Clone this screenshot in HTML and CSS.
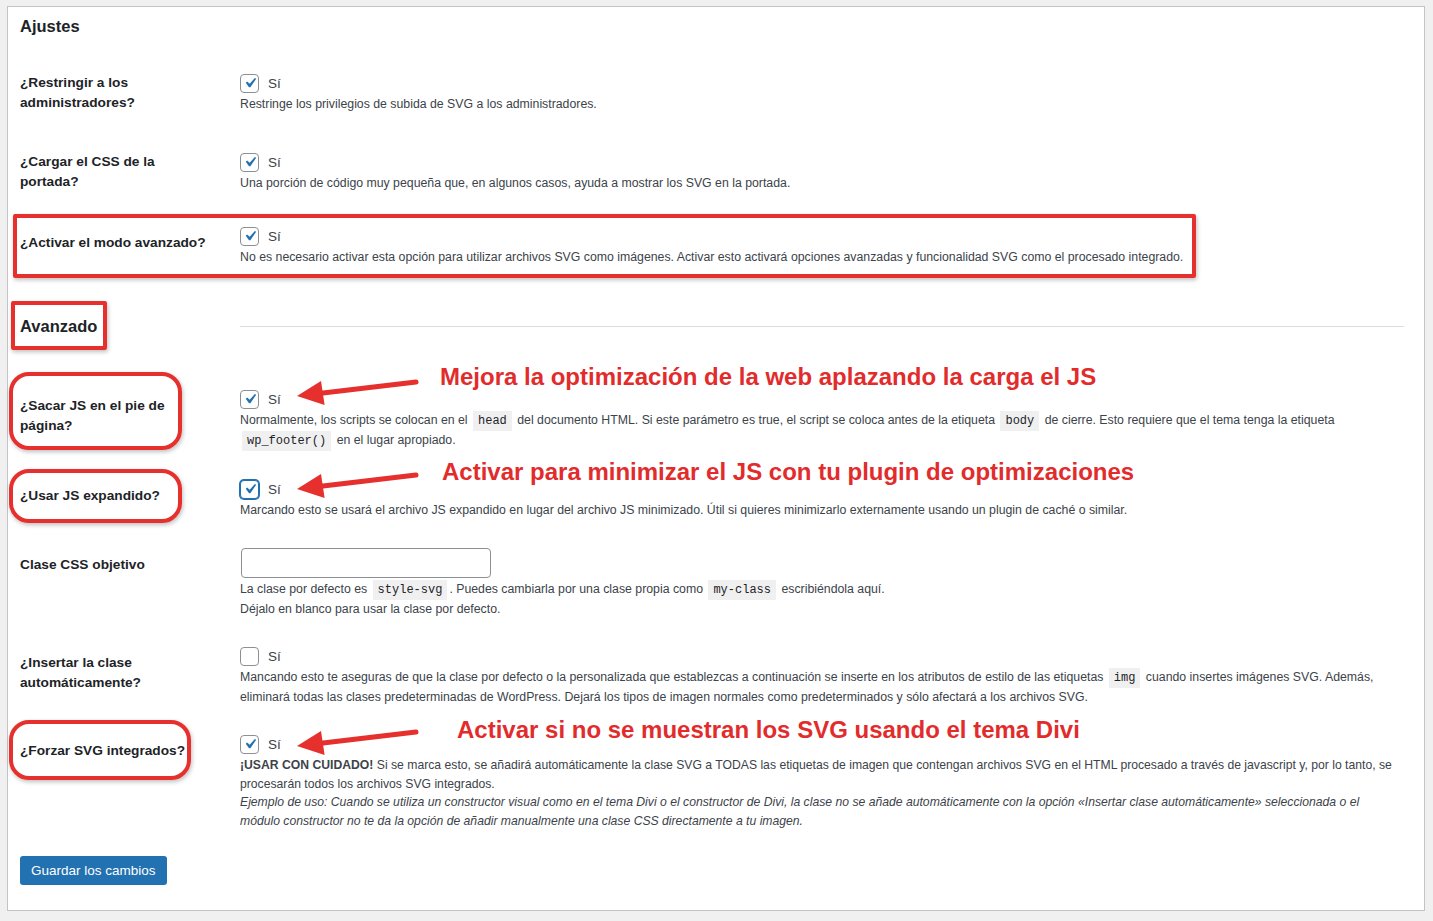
FILE: index.html
```html
<!DOCTYPE html>
<html lang="es">
<head>
<meta charset="utf-8">
<title>Ajustes</title>
<link rel="stylesheet" href="styles.css">
</head>
<body>
<div class="panel">
  <h2 class="section-title">Ajustes</h2>

  <div class="row gap-37">
    <div class="label label-flush">¿Restringir a los<br>administradores?</div>
    <div class="field">
      <label class="check"><span class="box"><svg viewBox="0 0 20 20"><path d="M14.83 4.89l1.34.94-5.81 8.38H9.02L5.78 9.670l1.34-1.25 2.57 2.4z"/></svg></span><span>Sí</span></label>
      <p class="desc">Restringe los privilegios de subida de SVG a los administradores.</p>
    </div>
  </div>

  <div class="row gap-38">
    <div class="label label-flush">¿Cargar el CSS de la<br>portada?</div>
    <div class="field">
      <label class="check"><span class="box"><svg viewBox="0 0 20 20"><path d="M14.83 4.89l1.34.94-5.81 8.38H9.02L5.78 9.67l1.34-1.25 2.57 2.4z"/></svg></span><span>Sí</span></label>
      <p class="desc">Una porción de código muy pequeña que, en algunos casos, ayuda a mostrar los SVG en la portada.</p>
    </div>
  </div>

  <div class="row gap-33">
    <div class="label">¿Activar el modo avanzado?</div>
    <div class="field">
      <label class="check"><span class="box"><svg viewBox="0 0 20 20"><path d="M14.83 4.89l1.34.94-5.81 8.38H9.02L5.78 9.67l1.34-1.25 2.57 2.4z"/></svg></span><span>Sí</span></label>
      <p class="desc">No es necesario activar esta opción para utilizar archivos SVG como imágenes. Activar esto activará opciones avanzadas y funcionalidad SVG como el procesado integrado.</p>
    </div>
    <div class="hl hl-rect hl-mode"></div>
  </div>

  <div class="row row-heading gap-49">
    <h2 class="section-title">Avanzado</h2>
    <div class="rule"></div>
    <div class="hl hl-rect hl-advanced"></div>
  </div>

  <div class="row gap-53">
    <div class="label">¿Sacar JS en el pie de<br>página?</div>
    <div class="field">
      <label class="check"><span class="box"><svg viewBox="0 0 20 20"><path d="M14.83 4.89l1.34.94-5.81 8.38H9.02L5.78 9.67l1.34-1.25 2.57 2.4z"/></svg></span><span>Sí</span></label>
      <p class="desc">Normalmente, los scripts se colocan en el <code>head</code> del documento HTML. Si este parámetro es true, el script se coloca antes de la etiqueta <code>body</code> de cierre. Esto requiere que el tema tenga la etiqueta<br><code>wp_footer()</code> en el lugar apropiado.</p>
    </div>
    <div class="hl hl-round hl-footer"></div>
    <svg class="arrow arrow-footer" viewBox="0 0 125 32"><line x1="121" y1="8" x2="28" y2="19"/><polygon points="2,22 29.6,31 26,7"/></svg>
    <div class="note note-footer">Mejora la optimización de la web aplazando la carga el JS</div>
  </div>

  <div class="row gap-29">
    <div class="label">¿Usar JS expandido?</div>
    <div class="field">
      <label class="check"><span class="box box-focus"><svg viewBox="0 0 20 20"><path d="M14.83 4.89l1.34.94-5.81 8.38H9.02L5.78 9.67l1.34-1.25 2.57 2.4z"/></svg></span><span>Sí</span></label>
      <p class="desc">Marcando esto se usará el archivo JS expandido en lugar del archivo JS minimizado. Útil si quieres minimizarlo externamente usando un plugin de caché o similar.</p>
    </div>
    <div class="hl hl-round hl-expanded"></div>
    <svg class="arrow arrow-expanded" viewBox="0 0 125 32"><line x1="121" y1="8" x2="28" y2="19"/><polygon points="2,22 29.6,31 26,7"/></svg>
    <div class="note note-expanded">Activar para minimizar el JS con tu plugin de optimizaciones</div>
  </div>

  <div class="row gap-28">
    <div class="label">Clase CSS objetivo</div>
    <div class="field">
      <input class="text-input" type="text">
      <p class="desc">La clase por defecto es <code>style-svg</code>. Puedes cambiarla por una clase propia como <code>my-class</code> escribiéndola aquí.<br>Déjalo en blanco para usar la clase por defecto.</p>
    </div>
  </div>

  <div class="row gap-27">
    <div class="label">¿Insertar la clase<br>automáticamente?</div>
    <div class="field">
      <label class="check"><span class="box box-empty"></span><span>Sí</span></label>
      <p class="desc">Mancando esto te aseguras de que la clase por defecto o la personalizada que establezcas a continuación se inserte en los atributos de estilo de las etiquetas <code>img</code> cuando insertes imágenes SVG. Además,<br>eliminará todas las clases predeterminadas de WordPress. Dejará los tipos de imagen normales como predeterminados y sólo afectará a los archivos SVG.</p>
    </div>
  </div>

  <div class="row gap-27">
    <div class="label">¿Forzar SVG integrados?</div>
    <div class="field">
      <label class="check"><span class="box"><svg viewBox="0 0 20 20"><path d="M14.83 4.89l1.34.94-5.81 8.38H9.02L5.78 9.67l1.34-1.25 2.57 2.4z"/></svg></span><span>Sí</span></label>
      <div class="desc-group">
        <p class="desc desc-tight"><strong>¡USAR CON CUIDADO!</strong> Si se marca esto, se añadirá automáticamente la clase SVG a TODAS las etiquetas de imagen que contengan archivos SVG en el HTML procesado a través de javascript y, por lo tanto, se<br>procesarán todos los archivos SVG integrados.</p>
        <p class="desc desc-tight"><em>Ejemplo de uso: Cuando se utiliza un constructor visual como en el tema Divi o el constructor de Divi, la clase no se añade automáticamente con la opción «Insertar clase automáticamente» seleccionada o el<br>módulo constructor no te da la opción de añadir manualmente una clase CSS directamente a tu imagen.</em></p>
      </div>
    </div>
    <div class="hl hl-round hl-force"></div>
    <svg class="arrow arrow-force" viewBox="0 0 125 32"><line x1="121" y1="8" x2="28" y2="19"/><polygon points="2,22 29.6,31 26,7"/></svg>
    <div class="note note-force">Activar si no se muestran los SVG usando el tema Divi</div>
  </div>

  <div class="actions gap-26">
    <button class="btn" type="button">Guardar los cambios</button>
  </div>
</div>
</body>
</html>
```

FILE: styles.css
```css
html, body {
  margin: 0;
  padding: 0;
}
body {
  background: #f0f0f1;
  font-family: "Liberation Sans", Arial, sans-serif;
  color: #1d2327;
  height: 921px;
  overflow: hidden;
}
.panel {
  margin: 6px 8px 0 7px;
  background: #fff;
  border: 1px solid #c3c4c7;
  padding: 9px 20px 25px 12px;
  position: relative;
}
.section-title {
  margin: 0;
  font-size: 16.5px;
  line-height: 20px;
  font-weight: bold;
  color: #1d2327;
}
.row {
  display: grid;
  grid-template-columns: 220px 1fr;
  position: relative;
}
.gap-26 { margin-top: 26px; }
.gap-27 { margin-top: 27px; }
.gap-28 { margin-top: 28px; }
.gap-29 { margin-top: 29px; }
.gap-33 { margin-top: 33px; }
.gap-37 { margin-top: 37px; }
.gap-38 { margin-top: 38px; }
.gap-49 { margin-top: 49px; }
.gap-53 { margin-top: 53px; }

.label {
  font-size: 13.7px;
  font-weight: bold;
  line-height: 20px;
  padding-top: 6.5px;
  color: #1d2327;
}
.label-flush { padding-top: 0; }

.field { min-width: 0; }
.check {
  display: flex;
  align-items: center;
  gap: 9px;
  height: 20px;
  font-size: 13.5px;
  color: #3c434a;
}
.box {
  width: 19px;
  height: 19px;
  box-sizing: border-box;
  border: 1px solid #8c8f94;
  border-radius: 4px;
  background: #fff;
  display: flex;
  align-items: center;
  justify-content: center;
}
.box svg {
  width: 20px;
  height: 20px;
  fill: #2271b1;
  flex: none;
}
.box-focus {
  border-color: #2271b1;
  box-shadow: 0 0 0 1px #2271b1;
}
.desc {
  margin: 1px 0 0;
  font-size: 12.3px;
  line-height: 20px;
  color: #3c434a;
  white-space: nowrap;
}
.desc-group { margin-top: 2px; }
.desc-tight {
  font-size: 12.2px;
  line-height: 18.5px;
  margin: 0;
}
.desc strong { font-weight: bold; }
code {
  font-family: "Liberation Mono", "DejaVu Sans Mono", monospace;
  font-size: 12px;
  line-height: 1;
  background: #f0f0f1;
  padding: 3px 5px;
  margin: 0 2px;
  color: #1d2327;
}
.text-input {
  display: block;
  width: 250px;
  height: 30px;
  box-sizing: border-box;
  border: 1px solid #8c8f94;
  border-radius: 4px;
  background: #fff;
  margin: 0 0 0 1px;
}
.row-heading .rule {
  height: 1px;
  background: #dcdcde;
  align-self: center;
}
.actions { display: flex; }
.btn {
  background: #2271b1;
  color: #fff;
  border: 0;
  border-radius: 3px;
  height: 29px;
  padding: 0 11px;
  font-family: "Liberation Sans", Arial, sans-serif;
  font-size: 13.5px;
}

/* annotation overlays */
.hl {
  position: absolute;
  box-sizing: border-box;
  border: 4px solid #e5302d;
  box-shadow: 1px 2px 4px rgba(0,0,0,0.25);
  pointer-events: none;
}
.hl-rect { border-radius: 2px; }
.hl-round { border-radius: 20px; }
.hl-mode { left: -7px; top: -12px; width: 1183px; height: 64px; }
.hl-advanced { left: -9px; top: -15px; width: 96px; height: 49px; }
.hl-footer { left: -11px; top: -17px; width: 173px; height: 78px; }
.hl-expanded { left: -11px; top: -10px; width: 173px; height: 54px; }
.hl-force { left: -11px; top: -14px; width: 182px; height: 60px; }

.arrow {
  position: absolute;
  left: 275px;
  width: 125px;
  height: 32px;
  overflow: visible;
}
.arrow line {
  stroke: #e5302d;
  stroke-width: 5;
  stroke-linecap: round;
}
.arrow polygon { fill: #e5302d; }
.arrow-footer { top: -15px; }
.arrow-expanded { top: -12px; }
.arrow-force { top: -10px; }

.note {
  position: absolute;
  font-size: 24px;
  line-height: 28px;
  font-weight: bold;
  color: #e22c2c;
  white-space: nowrap;
}
.note-footer { left: 420px; top: -26px; }
.note-expanded { left: 422px; top: -21px; }
.note-force { left: 437px; top: -18px; }
```
